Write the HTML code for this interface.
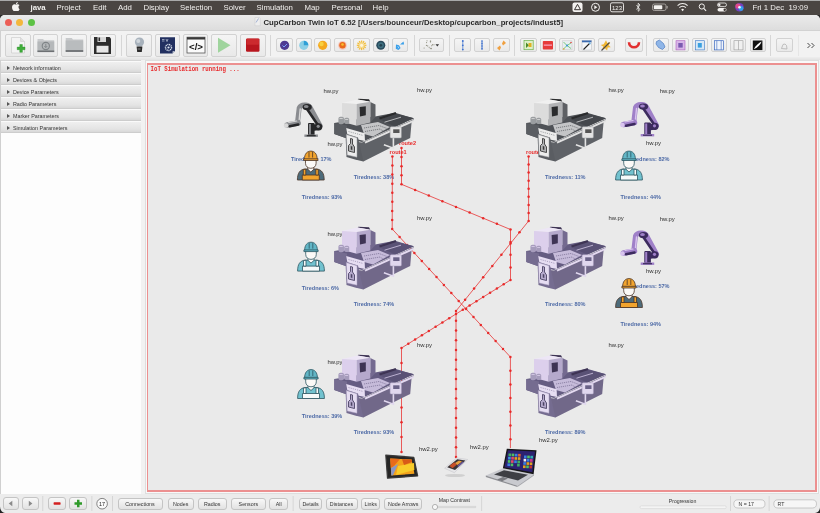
<!DOCTYPE html>
<html><head><meta charset="utf-8">
<style>
*{box-sizing:border-box;margin:0;padding:0}
html,body{width:820px;height:513px;overflow:hidden;background:#2b2b2b;font-family:"Liberation Sans",sans-serif;-webkit-font-smoothing:antialiased}
#root{position:absolute;left:0;top:0;width:820px;height:513px;will-change:transform}
.a{position:absolute}
#menubar{left:0;top:0;width:820px;height:15px;background:#4a4542;border-top:1px solid #a9a9a9;color:#f2f0ee;font-size:7.8px}
#menubar span{position:absolute;top:1.5px;white-space:nowrap}
#win{left:0;top:14.5px;width:820px;height:498.5px;background:#f2f2f2;border-radius:5px 5px 0 0;overflow:hidden;border-left:1px solid #d0d0d0}
#titlebar{left:0;top:14.5px;width:820px;height:16px;background:linear-gradient(#ebebeb,#dddddd);border-bottom:1px solid #d2d2d2;border-radius:5px 5px 0 0}
.tl{position:absolute;top:19px;width:7px;height:7px;border-radius:50%}
#title{left:263.5px;top:18px;font-size:7.76px;font-weight:bold;color:#2a2a2a;white-space:nowrap}
.btn{position:absolute;border:1px solid #d2d2d2;border-radius:2px;background:linear-gradient(#f4f4f4,#e9e9e9)}
.sep{position:absolute;width:1px;background:#d6d6d6}
#panel{left:1px;top:60.2px;width:139.6px;height:434px;background:#fdfdfd;border-top:0.8px solid #d6d6d6}
.row{position:absolute;left:0;width:139.6px;height:12px;background:linear-gradient(#efefef,#e4e4e4 70%,#d8d8d8);border-bottom:1px solid #cdcdcd;border-top:0.5px solid #fafafa;font-size:5.4px;color:#333}
.row span{position:absolute;left:11.9px;top:2.6px;white-space:nowrap}
.row i{position:absolute;left:5.6px;top:3.8px;width:0;height:0;border-left:3px solid #555;border-top:2px solid transparent;border-bottom:2px solid transparent}
#map{left:146.8px;top:62.6px;width:669.8px;height:429px;border:2px solid #ec9090;border-left-width:1.6px;background:#eaeaea;overflow:hidden}
.bb{position:absolute;top:497.5px;height:12.5px;border:1px solid #c4c4c4;border-radius:3px;background:linear-gradient(#f8f8f8,#e2e2e2);font-size:5.3px;color:#333;text-align:center;line-height:10.5px;white-space:nowrap}
</style></head><body><div id="root">
<div id="menubar" class="a">
<svg class="a" style="left:11.5px;top:1px" width="8" height="9" viewBox="0 0 170 200"><path fill="#f4f2f0" d="M140 107c0-26 21-38 22-39-12-18-31-20-37-21-16-2-31 9-39 9s-20-9-34-9C33 48 15 59 6 76c-19 33-5 82 13 108 9 13 19 27 33 26 13-1 18-8 34-8s20 8 34 8c14 0 23-13 32-26 10-15 14-29 14-30-1 0-26-10-26-47zM114 31c7-9 12-21 11-33-10 0-23 7-30 16-7 8-13 20-11 32 11 1 23-6 30-15z" transform="translate(0,2)"/></svg>
<span style="left:30.5px;font-weight:bold">java</span>
<span style="left:56.5px;">Project</span>
<span style="left:93px;">Edit</span>
<span style="left:118px;">Add</span>
<span style="left:143.5px;">Display</span>
<span style="left:180px;">Selection</span>
<span style="left:223.5px;">Solver</span>
<span style="left:256.5px;">Simulation</span>
<span style="left:304.5px;">Map</span>
<span style="left:331.5px;">Personal</span>
<span style="left:372.5px;">Help</span>
<span style="left:752.5px;">Fri 1 Dec&nbsp; 19:09</span>
</div>
<div id="win" class="a"></div>
<svg class="a" style="left:0;top:0" width="820" height="15" viewBox="0 0 820 15">
<rect x="572.5" y="2.5" width="10" height="9.5" rx="2" fill="#f4f2f0"/><path d="M577.5 4.3l3 5.4h-6z" fill="none" stroke="#3c3633" stroke-width="1"/>
<circle cx="595.5" cy="7.3" r="4" fill="none" stroke="#f4f2f0" stroke-width="1"/><path d="M594.3 5.3l3 2-3 2z" fill="#f4f2f0"/>
<rect x="610.5" y="2.8" width="13" height="9" rx="1.5" fill="none" stroke="#f4f2f0" stroke-width="0.9"/><text x="617" y="10" font-family="Liberation Sans" font-size="6" fill="#f4f2f0" text-anchor="middle">123</text>
<path d="M636.5 5l3.5 4.5-1.8 1.8V3.2l1.8 1.8-3.5 4.5" fill="none" stroke="#f4f2f0" stroke-width="0.8"/>
<rect x="652.5" y="4" width="13.5" height="6.5" rx="1.8" fill="none" stroke="#b8b4b0" stroke-width="0.8"/><rect x="653.8" y="5.3" width="8.5" height="4" rx="0.8" fill="#f4f2f0"/><rect x="666.6" y="6" width="1" height="2.5" fill="#b8b4b0"/>
<path d="M677.6 5.6a7 7 0 0 1 10 0" fill="none" stroke="#f4f2f0" stroke-width="1.1"/><path d="M679.4 7.6a4.4 4.4 0 0 1 6.4 0" fill="none" stroke="#f4f2f0" stroke-width="1.1"/><path d="M681.2 9.6a1.9 1.9 0 0 1 2.8 0l-1.4 1.6z" fill="#f4f2f0"/>
<circle cx="701.8" cy="6.5" r="2.6" fill="none" stroke="#f4f2f0" stroke-width="1"/><path d="M703.7 8.4l2.4 2.4" stroke="#f4f2f0" stroke-width="1.1"/>
<rect x="717.5" y="3" width="9" height="3.6" rx="1.8" fill="none" stroke="#f4f2f0" stroke-width="0.8"/><rect x="717.5" y="8" width="9" height="3.6" rx="1.8" fill="#f4f2f0"/><circle cx="719.3" cy="4.8" r="1.2" fill="#f4f2f0"/><circle cx="724.7" cy="9.8" r="1.2" fill="#3c3633"/>
<circle cx="739.5" cy="7.3" r="4.3" fill="#7040c0"/><circle cx="738" cy="6" r="2.6" fill="#e04a8a"/><circle cx="741" cy="8.5" r="2.4" fill="#30a0e8"/><circle cx="739.5" cy="7.3" r="1.3" fill="#f0f0ff"/>
</svg>
<div id="titlebar" class="a"></div>
<div class="a" style="left:0;top:57px;width:820px;height:3.4px;background:linear-gradient(#eeeeee,#e2e2e2)"></div>
<div class="tl" style="left:4.8px;background:#ec5f57"></div><div class="tl" style="left:16.3px;background:#f3b73d"></div><div class="tl" style="left:27.7px;background:#5dc245"></div>
<div id="title" class="a">CupCarbon Twin IoT 6.52 [/Users/bounceur/Desktop/cupcarbon_projects/indust5]</div>
<div class="btn" style="left:4.5px;top:34.3px;width:26.0px;height:22.4px"></div>
<div class="btn" style="left:33.3px;top:34.3px;width:25.2px;height:22.4px"></div>
<div class="btn" style="left:61.4px;top:34.3px;width:25.9px;height:22.4px"></div>
<div class="btn" style="left:89.6px;top:34.3px;width:26.2px;height:22.4px"></div>
<div class="btn" style="left:126px;top:34.3px;width:25.8px;height:22.4px"></div>
<div class="btn" style="left:154.6px;top:34.3px;width:25.8px;height:22.4px"></div>
<div class="btn" style="left:183.4px;top:34.3px;width:25.0px;height:22.4px"></div>
<div class="btn" style="left:211.3px;top:34.3px;width:25.9px;height:22.4px"></div>
<div class="btn" style="left:239.6px;top:34.3px;width:26.3px;height:22.4px"></div>
<div class="btn" style="left:276.3px;top:38.3px;width:16.7px;height:14.2px"></div>
<div class="btn" style="left:295.6px;top:38.3px;width:16.5px;height:14.2px"></div>
<div class="btn" style="left:314.4px;top:38.3px;width:16.6px;height:14.2px"></div>
<div class="btn" style="left:334px;top:38.3px;width:17.0px;height:14.2px"></div>
<div class="btn" style="left:353.3px;top:38.3px;width:16.7px;height:14.2px"></div>
<div class="btn" style="left:372.5px;top:38.3px;width:16.7px;height:14.2px"></div>
<div class="btn" style="left:391.7px;top:38.3px;width:16.7px;height:14.2px"></div>
<div class="btn" style="left:454.3px;top:38.3px;width:17.0px;height:14.2px"></div>
<div class="btn" style="left:473.8px;top:38.3px;width:16.2px;height:14.2px"></div>
<div class="btn" style="left:493.3px;top:38.3px;width:16.5px;height:14.2px"></div>
<div class="btn" style="left:520.2px;top:38.3px;width:16.8px;height:14.2px"></div>
<div class="btn" style="left:539.5px;top:38.3px;width:16.8px;height:14.2px"></div>
<div class="btn" style="left:559.3px;top:38.3px;width:16.1px;height:14.2px"></div>
<div class="btn" style="left:578.3px;top:38.3px;width:16.9px;height:14.2px"></div>
<div class="btn" style="left:597.6px;top:38.3px;width:17.0px;height:14.2px"></div>
<div class="btn" style="left:625.2px;top:38.3px;width:17.5px;height:14.2px"></div>
<div class="btn" style="left:652.5px;top:38.3px;width:16.4px;height:14.2px"></div>
<div class="btn" style="left:672.3px;top:38.3px;width:16.4px;height:14.2px"></div>
<div class="btn" style="left:691.5px;top:38.3px;width:16.5px;height:14.2px"></div>
<div class="btn" style="left:710.7px;top:38.3px;width:16.5px;height:14.2px"></div>
<div class="btn" style="left:730.4px;top:38.3px;width:16.0px;height:14.2px"></div>
<div class="btn" style="left:749.6px;top:38.3px;width:16.0px;height:14.2px"></div>
<div class="btn" style="left:776.2px;top:38.3px;width:17.1px;height:14.2px"></div>
<div class="btn" style="left:419.3px;top:38.3px;width:24.3px;height:14px"></div>
<div class="sep" style="left:120.5px;top:35px;height:21px"></div>
<div class="sep" style="left:269.8px;top:35px;height:21px"></div>
<div class="sep" style="left:413.5px;top:35px;height:21px"></div>
<div class="sep" style="left:448.5px;top:35px;height:21px"></div>
<div class="sep" style="left:514.2px;top:35px;height:21px"></div>
<div class="sep" style="left:646.4px;top:35px;height:21px"></div>
<div class="sep" style="left:770.4px;top:35px;height:21px"></div>
<div class="sep" style="left:797.8px;top:35px;height:21px;background:#e6e6e6"></div>
<svg class="a" style="left:0;top:0" width="820" height="60" viewBox="0 0 820 60">
<path d="M255 17.5h4.5l0.8 0.8v7.5h-5.3z" fill="#eeeeee" stroke="#c4c4c8" stroke-width="0.4"/><path d="M256 22.5l2.5-4" stroke="#9aaad0" stroke-width="0.9"/>
<path d="M11.5 37.5h9l4 4v11.5h-13z" fill="#f4f4f4" stroke="#c8c8c8" stroke-width="0.6"/><path d="M20.5 37.5v4h4" fill="#e0e0e0" stroke="#c8c8c8" stroke-width="0.5"/>
<path d="M19.8 44.5h2.6v2.6h2.6v2.6h-2.6v2.6h-2.6v-2.6h-2.6v-2.6h2.6z" fill="#3fae3a" stroke="#2b8a28" stroke-width="0.4"/>
<path d="M37.5 39h5.5l1.2 1.3h10v11.7h-16.7z" fill="#c9cbcd"/><rect x="37.5" y="41.5" width="16.7" height="10.5" fill="#b5b8ba"/><rect x="37.5" y="50.5" width="16.7" height="1.6" fill="#6d7073"/><circle cx="45.8" cy="46" r="3.6" fill="none" stroke="#7f8487" stroke-width="1.1"/><path d="M45.8 43.8v3.6M44.3 46l1.5 1.6 1.5-1.6" stroke="#7f8487" stroke-width="0.9" fill="none"/>
<path d="M65.7 38h6l1.3 1.4h10.2v12.4h-17.5z" fill="#c7c9cb"/><rect x="65.7" y="40.5" width="17.5" height="11.3" fill="#b9bcbe"/><rect x="65.7" y="50.2" width="17.5" height="1.6" fill="#65686b"/>
<path d="M94 37h15.5l1.5 1.5v15.4h-17z" fill="#2c2c2c"/><rect x="97.5" y="37" width="8.5" height="5" fill="#d8d8d8"/><rect x="98.5" y="37.5" width="1.6" height="3.6" fill="#2c2c2c"/><rect x="96.5" y="45.8" width="12" height="6.8" fill="#e6e6e6"/>
<circle cx="139.5" cy="42" r="4.6" fill="#a8b2bc"/><circle cx="138.3" cy="41" r="2" fill="#d0d6dc"/><path d="M136.6 46.5h5.8l-0.6 5.6h-4.6z" fill="#2a2a2a"/><rect x="137.6" y="48.5" width="3" height="1" fill="#888"/>
<path d="M160 37.2h15v14l-2.4 2.4h-12.6z" fill="#223060"/><path d="M172.6 53.6v-2.4h2.4z" fill="#dfe3ea"/><circle cx="168.5" cy="47.5" r="3" fill="none" stroke="#dfe6f0" stroke-width="1.4" stroke-dasharray="1.1 0.7"/><circle cx="168.5" cy="47.5" r="1.1" fill="#dfe6f0"/><path d="M162 39.5h2.5M162 41h2.5M166 39l1 2.5 1-2.5" stroke="#dfe6f0" stroke-width="0.6" fill="none"/>
<rect x="187" y="37.2" width="18" height="15.8" fill="#fafafa" stroke="#555" stroke-width="0.8"/><rect x="187" y="37.2" width="18" height="2.3" fill="#3a3a3a"/><text x="196" y="50" font-family="Liberation Sans" font-size="9" font-weight="bold" text-anchor="middle" fill="#111" textLength="14" lengthAdjust="spacingAndGlyphs">&lt;/&gt;</text>
<path d="M218 37.8L230.5 45.3L218 52.8z" fill="#9fd49d"/>
<rect x="246" y="38.4" width="13.5" height="13.4" rx="1.2" fill="#b8161e"/><rect x="246.5" y="38.8" width="12.5" height="6" rx="1" fill="#cc2a2e"/>
<circle cx="284.6" cy="45.3" r="4.6" fill="#4f3a92"/><path d="M282.5 45.5l1.5 1.5 3-3" stroke="#7aa0ff" stroke-width="1" fill="none"/>
<circle cx="303.8" cy="45.3" r="4.6" fill="#8ccfe6"/><path d="M303.8 40.7a4.6 4.6 0 0 1 4.6 4.6h-4.6z" fill="#2f9fd6"/>
<circle cx="322.7" cy="45.3" r="4.6" fill="#f4a81e"/><circle cx="321.5" cy="44" r="2.2" fill="#f8d040"/>
<circle cx="342.5" cy="45.3" r="4.4" fill="#f3c6bf"/><circle cx="342.5" cy="45.3" r="3.2" fill="#ea6a1c"/><circle cx="342.5" cy="44.5" r="1.3" fill="#f8c030"/>
<g stroke="#f2be3c" stroke-width="1.3"><line x1="364.20" y1="45.30" x2="366.40" y2="45.30"/><line x1="363.85" y1="46.60" x2="365.76" y2="47.70"/><line x1="362.90" y1="47.55" x2="364.00" y2="49.46"/><line x1="361.60" y1="47.90" x2="361.60" y2="50.10"/><line x1="360.30" y1="47.55" x2="359.20" y2="49.46"/><line x1="359.35" y1="46.60" x2="357.44" y2="47.70"/><line x1="359.00" y1="45.30" x2="356.80" y2="45.30"/><line x1="359.35" y1="44.00" x2="357.44" y2="42.90"/><line x1="360.30" y1="43.05" x2="359.20" y2="41.14"/><line x1="361.60" y1="42.70" x2="361.60" y2="40.50"/><line x1="362.90" y1="43.05" x2="364.00" y2="41.14"/><line x1="363.85" y1="44.00" x2="365.76" y2="42.90"/></g><circle cx="361.6" cy="45.3" r="2.6" fill="#f6d884"/><circle cx="361.6" cy="45.3" r="1.6" fill="#fff4d8"/>
<circle cx="380.8" cy="45.3" r="4.5" fill="#2a4a5c"/><circle cx="380.8" cy="45.3" r="3" fill="#3f7080"/><circle cx="380.8" cy="45.3" r="1.4" fill="#24414f"/>
<path d="M396 44.5l3 0.8 1.6 2.8-2.2 1.8-2.6-1.2z" fill="#3aa0ea"/><path d="M400 44.5l3.5-3 0.6 3z" fill="#3aa0ea"/><path d="M397.5 46.5l1.2 0.6-0.6 1.2" stroke="#fff" stroke-width="0.5" fill="none"/>
<g fill="#8a8a7a"><circle cx="426.4" cy="45.4" r="0.55"/><circle cx="427.7" cy="45.9" r="0.55"/><circle cx="430.3" cy="41.1" r="0.55"/><circle cx="424.1" cy="48.0" r="0.55"/><circle cx="426.6" cy="42.6" r="0.55"/><circle cx="434.0" cy="44.7" r="0.55"/><circle cx="432.4" cy="44.8" r="0.55"/><circle cx="430.4" cy="41.9" r="0.55"/><circle cx="430.3" cy="48.3" r="0.55"/><circle cx="429.2" cy="47.2" r="0.55"/><circle cx="430.7" cy="41.1" r="0.55"/><circle cx="431.6" cy="45.8" r="0.55"/><circle cx="427.0" cy="40.8" r="0.55"/><circle cx="432.7" cy="44.8" r="0.55"/><circle cx="431.2" cy="48.4" r="0.55"/><circle cx="431.1" cy="48.8" r="0.55"/></g><path d="M435.5 44.2h3.6l-1.8 2.2z" fill="#333"/>
<g stroke="#5080d0" stroke-width="0.8"><line x1="462.8" y1="40.5" x2="462.8" y2="50"/></g><g fill="#3b6fd0"><circle cx="462.8" cy="41" r="0.9"/><circle cx="462.8" cy="45.3" r="0.9"/><circle cx="462.8" cy="49.6" r="0.9"/></g>
<g stroke="#4b78cc" stroke-width="1"><line x1="482" y1="40.5" x2="482" y2="50"/></g><g fill="#3b6fd0"><circle cx="482" cy="41" r="0.7"/><circle cx="482" cy="43.5" r="0.7"/><circle cx="482" cy="46" r="0.7"/><circle cx="482" cy="48.5" r="0.7"/></g>
<path d="M503.5 40.5l2.5 2.5-3 2.5-1-2z" fill="#f0a040"/><path d="M499.5 50.5l-2.5-2.5 3-2.5 1 2z" fill="#f0a040"/>
<rect x="524" y="40.5" width="9.2" height="9.2" fill="#dff0c8" stroke="#6ab04a" stroke-width="0.7"/><path d="M526 42.5l3 2.8-3 2.8z" fill="#4a8a2a"/><rect x="528.5" y="43" width="3" height="4" fill="#e0b020"/>
<rect x="542.8" y="41" width="10.2" height="8.6" rx="0.8" fill="#e63a3a"/><rect x="543.8" y="44.6" width="8.2" height="1" fill="#fbd"/>
<rect x="562.5" y="40.8" width="9.5" height="9" fill="#e8eef0" stroke="#c6c6c6" stroke-width="0.5"/><path d="M563.5 42l3.5 3.5 4-2.5M563.5 49l3.5-3.5 4 3" stroke="#5ac060" stroke-width="0.8" fill="none"/><circle cx="567" cy="45.5" r="1" fill="#3a90e0"/><circle cx="571" cy="42.5" r="0.8" fill="#e84040"/><circle cx="563.8" cy="49" r="0.8" fill="#e0a020"/>
<rect x="582" y="40.5" width="9.5" height="9.5" fill="#f4f6f8" stroke="#b8bcc0" stroke-width="0.5"/><rect x="582" y="40.5" width="9.5" height="1.8" fill="#3a6ab0"/><path d="M583.5 49.5l6-6" stroke="#222" stroke-width="1.1"/><path d="M589 42.5l1.5 1.5" stroke="#6ab0e0" stroke-width="1.4"/>
<path d="M606 40.2l1.3 2.7 3-0.5-1.6 2.5 2 2.3-3 0.3-0.6 3-2-2.1-2.8 1.1 0.9-2.9-2.5-1.7 3-0.7z" fill="#f2b833"/><path d="M601.5 50.5l8-8" stroke="#4a4a4a" stroke-width="1.1"/>
<path d="M629 42.3a5 5 0 0 0 10 0" stroke="#e23030" stroke-width="2.6" fill="none"/>
<path d="M656.5 41.5l3-1.5 4 3.5 1.5 3.5-2.5 2.5-4-2-2.5-3.5z" fill="#8fb6e8" stroke="#3f6fb8" stroke-width="0.6"/>
<rect x="676" y="40.7" width="9" height="9.2" fill="#d8b6e8" stroke="#b060c0" stroke-width="0.6"/><rect x="678.3" y="43" width="4.4" height="4.6" fill="#7a5ab0"/>
<rect x="695.3" y="40.7" width="9" height="9.2" fill="#d8e8f6" stroke="#3a78c8" stroke-width="0.6"/><rect x="697.8" y="43" width="4" height="4.6" fill="#3aa0e0"/>
<rect x="714.5" y="40.7" width="9" height="9.2" fill="#f0f4fa" stroke="#3a68c0" stroke-width="0.7"/><line x1="716.8" y1="40.7" x2="716.8" y2="49.9" stroke="#3a68c0" stroke-width="0.6"/><line x1="721.2" y1="40.7" x2="721.2" y2="49.9" stroke="#3a68c0" stroke-width="0.6"/>
<rect x="734" y="40.7" width="9" height="9.2" fill="#f0f0f0" stroke="#9a9a9a" stroke-width="0.6"/><line x1="738.5" y1="40.7" x2="738.5" y2="49.9" stroke="#9a9a9a" stroke-width="0.6"/>
<rect x="752.8" y="40.5" width="9.6" height="9.6" fill="#111"/><path d="M753.8 49.2c2-4 5-6.5 7.8-7.8-1 3-3.5 6-7.8 7.8z" fill="#fff"/>
<path d="M781.5 48.5l1.5-4 2-0.5 1.5 1.5 0.5 3.5z" fill="none" stroke="#aaa" stroke-width="0.7"/>
<path d="M807.5 43l2.5 2.5-2.5 2.5M811.5 43l2.5 2.5-2.5 2.5" stroke="#333" stroke-width="0.9" fill="none"/>
</svg>
<div id="panel" class="a">
<div class="row" style="top:0px"><i></i><span>Network information</span></div>
<div class="row" style="top:12px"><i></i><span>Devices &amp; Objects</span></div>
<div class="row" style="top:24px"><i></i><span>Device Parameters</span></div>
<div class="row" style="top:36px"><i></i><span>Radio Parameters</span></div>
<div class="row" style="top:48px"><i></i><span>Marker Parameters</span></div>
<div class="row" style="top:60px"><i></i><span>Simulation Parameters</span></div>
</div>
<div class="a" style="left:144.5px;top:60.3px;width:674px;height:434px;background:#f9f9f9;border:0.8px solid #dedede"></div>
<div id="map" class="a"></div>
<svg class="a" style="left:0;top:0" width="820" height="513" viewBox="0 0 820 513">
<defs>
<symbol id="mg" viewBox="0 0 82 66" overflow="visible">
<path d="M1.3 25 L37 19 L42 18.5 L62 14.8 L81 20.3 L29 44 L14 40.4 L1.3 36 Z" fill="#4f5257"/>
<path d="M1.3 25 L14 27.5 L14 40.4 L1.3 36 Z" fill="#5a5d62"/>
<path d="M29 44.5 L81 21 L78.5 25 L77.2 40 L30.4 63.5 L24.6 59.5 L24.6 44 Z" fill="#5f6267"/>
<path d="M47 21.5 L63 15.8 L81 20.3 L62 28.5 Z" fill="#44474c"/>
<path d="M51.5 24.2 L68 19.2" stroke="#c4c5c7" stroke-width="0.9"/>
<path d="M46.5 20.5 L63 15" stroke="#2a2b2d" stroke-width="2.2"/>
<path d="M28 27 L45 24 L57 29 L40 38.5 L31 36 Z" fill="#c4c5c7"/>
<path d="M31 30 L46 27.5 L54 30.5 M32 33.5 L47 31 L50 33" stroke="#5a5d62" stroke-width="0.7" fill="none" stroke-dasharray="1.2 0.8"/>
<path d="M32 44.6 L80.5 22.8" stroke="#e2e2e2" stroke-width="2"/>
<path d="M37.3 4 L42.5 6.5 L42.5 19 L37.3 24.6 Z" fill="#5e6064"/>
<path d="M25.4 0.8 L36 1.2 L37.3 3.7 L24.6 1.6 Z" fill="#2a2b2d"/>
<path d="M9 4.9 L24.6 1.4 L37.3 3.7 L23.7 6.1 Z" fill="#f0f0f0"/>
<path d="M9 4.9 L23.7 6.1 L23.7 27.8 L9 23.8 Z" fill="#dcdcdc"/>
<path d="M23.7 6.1 L37.3 3.7 L37.3 24.6 L23.7 27.8 Z" fill="#b2b3b5"/>
<path d="M26.6 9 L32.8 8.2 L32.8 17.2 L27 18.4 Z" fill="#2a2b2d"/>
<rect x="5.4" y="18.8" width="5.6" height="7.4" rx="2" fill="#9a9da0"/><rect x="11.2" y="19.7" width="5" height="6.4" rx="1.8" fill="#9a9da0"/>
<path d="M6.5 20.5 h3.2 M12.2 21.5 h3" stroke="#dcdcdc" stroke-width="0.8"/>
<path d="M13.2 29.9 L31.6 35.2 L32 43 L14.9 39.5 Z" fill="#ececec"/>
<path d="M15.5 33.5 L29.5 37.3" stroke="#9a9da0" stroke-width="0.9" stroke-dasharray="1.2 1"/>
<path d="M12.5 35.5 L25 39.5 L30.4 63.5 L22 61.5 L13.5 59 Z" fill="#5a5d62"/><path d="M13.3 36.5 L24 39.8 L24 59.2 L14.2 57 Z" fill="#ececec" stroke="#9a9da0" stroke-width="0.5"/>
<path d="M17.5 40.5 L19.5 41 L19.5 46 L21.5 49 L21.5 54.5 L15.5 53 L15.5 47.5 L17.5 45.5 Z" fill="#b2b3b5" stroke="#3a3a3a" stroke-width="0.9"/><path d="M17.8 48 L19.3 48.4 L19.3 52 L17.8 51.6 Z" fill="#3a3a3a"/>
<path d="M60.4 39 L60.4 50.2 L50.9 46.8" stroke="#e4e4e4" stroke-width="1.6" fill="none"/>
<rect x="57.1" y="28.75" width="11.3" height="11.25" rx="1" fill="#e4e4e4" stroke="#9a9da0" stroke-width="0.5"/>
<rect x="60.2" y="31.3" width="6.3" height="3.7" fill="#555"/>
</symbol>
<symbol id="mp" viewBox="0 0 82 66" overflow="visible">
<path d="M1.3 25 L37 19 L42 18.5 L62 14.8 L81 20.3 L29 44 L14 40.4 L1.3 36 Z" fill="#655c82"/>
<path d="M1.3 25 L14 27.5 L14 40.4 L1.3 36 Z" fill="#756c90"/>
<path d="M29 44.5 L81 21 L78.5 25 L77.2 40 L30.4 63.5 L24.6 59.5 L24.6 44 Z" fill="#716889"/>
<path d="M47 21.5 L63 15.8 L81 20.3 L62 28.5 Z" fill="#5a5276"/>
<path d="M51.5 24.2 L68 19.2" stroke="#c6bbda" stroke-width="0.9"/>
<path d="M46.5 20.5 L63 15" stroke="#3e3454" stroke-width="2.2"/>
<path d="M28 27 L45 24 L57 29 L40 38.5 L31 36 Z" fill="#c6bbda"/>
<path d="M31 30 L46 27.5 L54 30.5 M32 33.5 L47 31 L50 33" stroke="#756c90" stroke-width="0.7" fill="none" stroke-dasharray="1.2 0.8"/>
<path d="M32 44.6 L80.5 22.8" stroke="#e4daf0" stroke-width="2"/>
<path d="M37.3 4 L42.5 6.5 L42.5 19 L37.3 24.6 Z" fill="#746a90"/>
<path d="M25.4 0.8 L36 1.2 L37.3 3.7 L24.6 1.6 Z" fill="#3e3454"/>
<path d="M9 4.9 L24.6 1.4 L37.3 3.7 L23.7 6.1 Z" fill="#ede6f6"/>
<path d="M9 4.9 L23.7 6.1 L23.7 27.8 L9 23.8 Z" fill="#dccfec"/>
<path d="M23.7 6.1 L37.3 3.7 L37.3 24.6 L23.7 27.8 Z" fill="#b5a9cc"/>
<path d="M26.6 9 L32.8 8.2 L32.8 17.2 L27 18.4 Z" fill="#3e3454"/>
<rect x="5.4" y="18.8" width="5.6" height="7.4" rx="2" fill="#a69cbc"/><rect x="11.2" y="19.7" width="5" height="6.4" rx="1.8" fill="#a69cbc"/>
<path d="M6.5 20.5 h3.2 M12.2 21.5 h3" stroke="#dccfec" stroke-width="0.8"/>
<path d="M13.2 29.9 L31.6 35.2 L32 43 L14.9 39.5 Z" fill="#e6ddf2"/>
<path d="M15.5 33.5 L29.5 37.3" stroke="#a69cbc" stroke-width="0.9" stroke-dasharray="1.2 1"/>
<path d="M12.5 35.5 L25 39.5 L30.4 63.5 L22 61.5 L13.5 59 Z" fill="#756c90"/><path d="M13.3 36.5 L24 39.8 L24 59.2 L14.2 57 Z" fill="#e6ddf2" stroke="#a69cbc" stroke-width="0.5"/>
<path d="M17.5 40.5 L19.5 41 L19.5 46 L21.5 49 L21.5 54.5 L15.5 53 L15.5 47.5 L17.5 45.5 Z" fill="#b5a9cc" stroke="#4c4464" stroke-width="0.9"/><path d="M17.8 48 L19.3 48.4 L19.3 52 L17.8 51.6 Z" fill="#4c4464"/>
<path d="M60.4 39 L60.4 50.2 L50.9 46.8" stroke="#e0d7ee" stroke-width="1.6" fill="none"/>
<rect x="57.1" y="28.75" width="11.3" height="11.25" rx="1" fill="#e0d7ee" stroke="#a69cbc" stroke-width="0.5"/>
<rect x="60.2" y="31.3" width="6.3" height="3.7" fill="#6a6288"/>
</symbol>
<symbol id="rg" viewBox="0 0 40 35" overflow="visible">
<path d="M14 17 L15.5 4.5 Q17 1 22 1.5 Q26 2 27 5 L36.5 22.5" stroke="#8a8c90" stroke-width="5" fill="none" stroke-linecap="round" stroke-linejoin="round"/>
<path d="M23 5 L35.5 23.5" stroke="#262729" stroke-width="2.6" fill="none" stroke-linecap="round"/>
<path d="M16.5 5.5 L15.5 16" stroke="#d8d8d8" stroke-width="1.4" fill="none" stroke-linecap="round"/>
<ellipse cx="23.5" cy="3.6" rx="4.6" ry="3.2" fill="#262729"/><ellipse cx="22.5" cy="3" rx="2.4" ry="1.6" fill="#8a8c90"/>
<rect x="24.3" y="19.5" width="6.6" height="12.5" rx="1" fill="#262729"/>
<rect x="25.2" y="20.5" width="2" height="10.5" fill="#8a8c90"/>
<rect x="20.7" y="31" width="13.5" height="2.4" fill="#8a8c90"/><rect x="23" y="31.6" width="9" height="1.2" fill="#262729"/>
<path d="M28 21.5 L35 20 L36 26.5 L29 27.5 Z" fill="#262729"/><circle cx="35" cy="23.3" r="3.6" fill="#262729"/><circle cx="34.5" cy="22.8" r="1.6" fill="#8a8c90"/>
<path d="M14.5 19.5 L3.5 21.5" stroke="#8a8c90" stroke-width="5.5" fill="none" stroke-linecap="round"/>
<path d="M14.5 21 L6 22.8" stroke="#262729" stroke-width="2.6" fill="none" stroke-linecap="round"/>
<path d="M13 17.5 L5 19" stroke="#d8d8d8" stroke-width="1.2" fill="none" stroke-linecap="round"/>
<circle cx="2.4" cy="22" r="2.3" fill="#d8d8d8"/>
</symbol>
<symbol id="rp" viewBox="0 0 40 35" overflow="visible">
<path d="M14 17 L15.5 4.5 Q17 1 22 1.5 Q26 2 27 5 L36.5 22.5" stroke="#9f80c8" stroke-width="5" fill="none" stroke-linecap="round" stroke-linejoin="round"/>
<path d="M23 5 L35.5 23.5" stroke="#3c2b5e" stroke-width="2.6" fill="none" stroke-linecap="round"/>
<path d="M16.5 5.5 L15.5 16" stroke="#d8c4ee" stroke-width="1.4" fill="none" stroke-linecap="round"/>
<ellipse cx="23.5" cy="3.6" rx="4.6" ry="3.2" fill="#3c2b5e"/><ellipse cx="22.5" cy="3" rx="2.4" ry="1.6" fill="#9f80c8"/>
<rect x="24.3" y="19.5" width="6.6" height="12.5" rx="1" fill="#3c2b5e"/>
<rect x="25.2" y="20.5" width="2" height="10.5" fill="#9f80c8"/>
<rect x="20.7" y="31" width="13.5" height="2.4" fill="#9f80c8"/><rect x="23" y="31.6" width="9" height="1.2" fill="#3c2b5e"/>
<path d="M28 21.5 L35 20 L36 26.5 L29 27.5 Z" fill="#3c2b5e"/><circle cx="35" cy="23.3" r="3.6" fill="#3c2b5e"/><circle cx="34.5" cy="22.8" r="1.6" fill="#9f80c8"/>
<path d="M14.5 19.5 L3.5 21.5" stroke="#9f80c8" stroke-width="5.5" fill="none" stroke-linecap="round"/>
<path d="M14.5 21 L6 22.8" stroke="#3c2b5e" stroke-width="2.6" fill="none" stroke-linecap="round"/>
<path d="M13 17.5 L5 19" stroke="#d8c4ee" stroke-width="1.2" fill="none" stroke-linecap="round"/>
<circle cx="2.4" cy="22" r="2.3" fill="#d8c4ee"/>
</symbol>
<symbol id="wo" viewBox="0 0 28 30" overflow="visible">
<g stroke="#4a3528" stroke-width="0.8" stroke-linejoin="round">
<path d="M0.6 29.5 C0.6 22.5 3 19.3 8 18.5 L20 18.5 C25 19.3 27.4 22.5 27.4 29.5 Z" fill="#4d6b7a"/>
<path d="M11 14.5 L17 14.5 L17 18.8 L14 21.5 L11 18.8 Z" fill="#fbf9f7"/>
<path d="M8.7 9 L19.3 9 L19.3 12.8 C19.3 15.8 17 17.8 14 17.8 C11 17.8 8.7 15.8 8.7 12.8 Z" fill="#fbf9f7"/>
<path d="M5.5 24.5 L22.5 24.5 L22.5 29.5 L5.5 29.5 Z" fill="#f2a42e"/>
<path d="M6.5 19 L9 18.7 L9 24.5 L6.5 24.5 Z M19 18.7 L21.5 19 L21.5 24.5 L19 24.5 Z" fill="#f2a42e"/>
<path d="M7.6 9 C7.6 3.2 10.4 0.6 14 0.6 C17.6 0.6 20.4 3.2 20.4 9 Z" fill="#f2a42e"/>
<path d="M6.9 8.3 L21.1 8.3 L21.1 10 L6.9 10 Z" fill="#f2a42e"/>
<path d="M12.2 1.5 L12.2 7 M15.8 1.5 L15.8 7" fill="none"/>
</g>
</symbol>
<symbol id="wt" viewBox="0 0 28 30" overflow="visible">
<g stroke="#2c5561" stroke-width="0.8" stroke-linejoin="round">
<path d="M0.6 29.5 C0.6 22.5 3 19.3 8 18.5 L20 18.5 C25 19.3 27.4 22.5 27.4 29.5 Z" fill="#72c2cf"/>
<path d="M11 14.5 L17 14.5 L17 18.8 L14 21.5 L11 18.8 Z" fill="#fbf9f7"/>
<path d="M8.7 9 L19.3 9 L19.3 12.8 C19.3 15.8 17 17.8 14 17.8 C11 17.8 8.7 15.8 8.7 12.8 Z" fill="#fbf9f7"/>
<path d="M5.5 24.5 L22.5 24.5 L22.5 29.5 L5.5 29.5 Z" fill="#f6fafa"/>
<path d="M6.5 19 L9 18.7 L9 24.5 L6.5 24.5 Z M19 18.7 L21.5 19 L21.5 24.5 L19 24.5 Z" fill="#f6fafa"/>
<path d="M7.6 9 C7.6 3.2 10.4 0.6 14 0.6 C17.6 0.6 20.4 3.2 20.4 9 Z" fill="#62b6c6"/>
<path d="M6.9 8.3 L21.1 8.3 L21.1 10 L6.9 10 Z" fill="#62b6c6"/>
<path d="M12.2 1.5 L12.2 7 M15.8 1.5 L15.8 7" fill="none"/>
</g>
</symbol>
</defs>
<clipPath id="mc"><rect x="148.5" y="64.5" width="667" height="426"/></clipPath><g clip-path="url(#mc)">
<text x="150.6" y="71.1" font-family="Liberation Mono" font-weight="bold" font-size="6.5" fill="#e8282a" textLength="89" lengthAdjust="spacingAndGlyphs">IoT Simulation running ...</text>
<text x="323.4" y="93.1" font-family="Liberation Sans" font-size="5.9" font-weight="normal" fill="#2e2e2e">hw.py</text>
<text x="417" y="92.1" font-family="Liberation Sans" font-size="5.9" font-weight="normal" fill="#2e2e2e">hw.py</text>
<text x="327.5" y="146.1" font-family="Liberation Sans" font-size="5.9" font-weight="normal" fill="#2e2e2e">hw.py</text>
<text x="608.6" y="92.1" font-family="Liberation Sans" font-size="5.9" font-weight="normal" fill="#2e2e2e">hw.py</text>
<text x="659.7" y="93.1" font-family="Liberation Sans" font-size="5.9" font-weight="normal" fill="#2e2e2e">hw.py</text>
<text x="646" y="145.1" font-family="Liberation Sans" font-size="5.9" font-weight="normal" fill="#2e2e2e">hw.py</text>
<text x="417" y="219.6" font-family="Liberation Sans" font-size="5.9" font-weight="normal" fill="#2e2e2e">hw.py</text>
<text x="327.5" y="236.1" font-family="Liberation Sans" font-size="5.9" font-weight="normal" fill="#2e2e2e">hw.py</text>
<text x="417" y="347.1" font-family="Liberation Sans" font-size="5.9" font-weight="normal" fill="#2e2e2e">hw.py</text>
<text x="608.6" y="219.6" font-family="Liberation Sans" font-size="5.9" font-weight="normal" fill="#2e2e2e">hw.py</text>
<text x="659.7" y="221.1" font-family="Liberation Sans" font-size="5.9" font-weight="normal" fill="#2e2e2e">hw.py</text>
<text x="646" y="272.7" font-family="Liberation Sans" font-size="5.9" font-weight="normal" fill="#2e2e2e">hw.py</text>
<text x="608.6" y="347.1" font-family="Liberation Sans" font-size="5.9" font-weight="normal" fill="#2e2e2e">hw.py</text>
<text x="327.5" y="363.7" font-family="Liberation Sans" font-size="5.9" font-weight="normal" fill="#2e2e2e">hw.py</text>
<text x="419" y="450.7" font-family="Liberation Sans" font-size="5.9" font-weight="normal" fill="#2e2e2e">hw2.py</text>
<text x="470" y="449.1" font-family="Liberation Sans" font-size="5.9" font-weight="normal" fill="#2e2e2e">hw2.py</text>
<text x="539" y="441.7" font-family="Liberation Sans" font-size="5.9" font-weight="normal" fill="#2e2e2e">hw2.py</text>
<text x="291" y="160.7" font-family="Liberation Sans" font-size="6.0" font-weight="bold" fill="#4d6aa6" textLength="40.5" lengthAdjust="spacingAndGlyphs">Tiredness: 17%</text>
<text x="353.7" y="179.2" font-family="Liberation Sans" font-size="6.0" font-weight="bold" fill="#4d6aa6" textLength="40.5" lengthAdjust="spacingAndGlyphs">Tiredness: 38%</text>
<text x="301.8" y="199.2" font-family="Liberation Sans" font-size="6.0" font-weight="bold" fill="#4d6aa6" textLength="40.5" lengthAdjust="spacingAndGlyphs">Tiredness: 93%</text>
<text x="545" y="179.2" font-family="Liberation Sans" font-size="6.0" font-weight="bold" fill="#4d6aa6" textLength="40.5" lengthAdjust="spacingAndGlyphs">Tiredness: 11%</text>
<text x="629" y="160.5" font-family="Liberation Sans" font-size="6.0" font-weight="bold" fill="#4d6aa6" textLength="40.5" lengthAdjust="spacingAndGlyphs">Tiredness: 82%</text>
<text x="620.5" y="198.7" font-family="Liberation Sans" font-size="6.0" font-weight="bold" fill="#4d6aa6" textLength="40.5" lengthAdjust="spacingAndGlyphs">Tiredness: 44%</text>
<text x="301.8" y="289.8" font-family="Liberation Sans" font-size="6.0" font-weight="bold" fill="#4d6aa6" textLength="37.2" lengthAdjust="spacingAndGlyphs">Tiredness: 6%</text>
<text x="353.7" y="306.4" font-family="Liberation Sans" font-size="6.0" font-weight="bold" fill="#4d6aa6" textLength="40.5" lengthAdjust="spacingAndGlyphs">Tiredness: 74%</text>
<text x="545" y="306.4" font-family="Liberation Sans" font-size="6.0" font-weight="bold" fill="#4d6aa6" textLength="40.5" lengthAdjust="spacingAndGlyphs">Tiredness: 80%</text>
<text x="629" y="288.2" font-family="Liberation Sans" font-size="6.0" font-weight="bold" fill="#4d6aa6" textLength="40.5" lengthAdjust="spacingAndGlyphs">Tiredness: 57%</text>
<text x="620.5" y="326.2" font-family="Liberation Sans" font-size="6.0" font-weight="bold" fill="#4d6aa6" textLength="40.5" lengthAdjust="spacingAndGlyphs">Tiredness: 94%</text>
<text x="301.8" y="417.7" font-family="Liberation Sans" font-size="6.0" font-weight="bold" fill="#4d6aa6" textLength="40.5" lengthAdjust="spacingAndGlyphs">Tiredness: 39%</text>
<text x="353.7" y="433.9" font-family="Liberation Sans" font-size="6.0" font-weight="bold" fill="#4d6aa6" textLength="40.5" lengthAdjust="spacingAndGlyphs">Tiredness: 93%</text>
<text x="545" y="433.5" font-family="Liberation Sans" font-size="6.0" font-weight="bold" fill="#4d6aa6" textLength="40.5" lengthAdjust="spacingAndGlyphs">Tiredness: 89%</text>
<line x1="510.4" y1="439" x2="510.4" y2="448" stroke="#e82a2a" stroke-width="0.75"/>
<polyline points="392.4,156.5 392.2,229 510.4,357 510.4,439.2" fill="none" stroke="#e82a2a" stroke-width="0.75"/>
<g fill="#e82a2a"><circle cx="392.4" cy="156.5" r="1.25"/><circle cx="392.4" cy="165.6" r="1.25"/><circle cx="392.3" cy="174.6" r="1.25"/><circle cx="392.3" cy="183.7" r="1.25"/><circle cx="392.3" cy="192.8" r="1.25"/><circle cx="392.3" cy="201.8" r="1.25"/><circle cx="392.2" cy="210.9" r="1.25"/><circle cx="392.2" cy="219.9" r="1.25"/><circle cx="392.2" cy="229.0" r="1.25"/><circle cx="399.6" cy="237.0" r="1.25"/><circle cx="407.0" cy="245.0" r="1.25"/><circle cx="414.4" cy="253.0" r="1.25"/><circle cx="421.8" cy="261.0" r="1.25"/><circle cx="429.1" cy="269.0" r="1.25"/><circle cx="436.5" cy="277.0" r="1.25"/><circle cx="443.9" cy="285.0" r="1.25"/><circle cx="451.3" cy="293.0" r="1.25"/><circle cx="458.7" cy="301.0" r="1.25"/><circle cx="466.1" cy="309.0" r="1.25"/><circle cx="473.5" cy="317.0" r="1.25"/><circle cx="480.8" cy="325.0" r="1.25"/><circle cx="488.2" cy="333.0" r="1.25"/><circle cx="495.6" cy="341.0" r="1.25"/><circle cx="503.0" cy="349.0" r="1.25"/><circle cx="510.4" cy="357.0" r="1.25"/><circle cx="510.4" cy="370.7" r="1.25"/><circle cx="510.4" cy="384.4" r="1.25"/><circle cx="510.4" cy="398.1" r="1.25"/><circle cx="510.4" cy="411.8" r="1.25"/><circle cx="510.4" cy="425.5" r="1.25"/><circle cx="510.4" cy="439.2" r="1.25"/></g>
<polyline points="401.5,148 401.5,184.3 510.5,229.5 510.5,280 401.5,348 401.5,452" fill="none" stroke="#e82a2a" stroke-width="0.75"/>
<g fill="#e82a2a"><circle cx="401.5" cy="148.0" r="1.25"/><circle cx="401.5" cy="157.1" r="1.25"/><circle cx="401.5" cy="166.2" r="1.25"/><circle cx="401.5" cy="175.2" r="1.25"/><circle cx="401.5" cy="184.3" r="1.25"/><circle cx="415.1" cy="190.0" r="1.25"/><circle cx="428.8" cy="195.6" r="1.25"/><circle cx="442.4" cy="201.2" r="1.25"/><circle cx="456.0" cy="206.9" r="1.25"/><circle cx="469.6" cy="212.6" r="1.25"/><circle cx="483.2" cy="218.2" r="1.25"/><circle cx="496.9" cy="223.8" r="1.25"/><circle cx="510.5" cy="229.5" r="1.25"/><circle cx="510.5" cy="242.1" r="1.25"/><circle cx="510.5" cy="254.8" r="1.25"/><circle cx="510.5" cy="267.4" r="1.25"/><circle cx="510.5" cy="280.0" r="1.25"/><circle cx="503.7" cy="284.2" r="1.25"/><circle cx="496.9" cy="288.5" r="1.25"/><circle cx="490.1" cy="292.8" r="1.25"/><circle cx="483.2" cy="297.0" r="1.25"/><circle cx="476.4" cy="301.2" r="1.25"/><circle cx="469.6" cy="305.5" r="1.25"/><circle cx="462.8" cy="309.8" r="1.25"/><circle cx="456.0" cy="314.0" r="1.25"/><circle cx="449.2" cy="318.2" r="1.25"/><circle cx="442.4" cy="322.5" r="1.25"/><circle cx="435.6" cy="326.8" r="1.25"/><circle cx="428.8" cy="331.0" r="1.25"/><circle cx="421.9" cy="335.2" r="1.25"/><circle cx="415.1" cy="339.5" r="1.25"/><circle cx="408.3" cy="343.8" r="1.25"/><circle cx="401.5" cy="348.0" r="1.25"/><circle cx="401.5" cy="362.9" r="1.25"/><circle cx="401.5" cy="377.7" r="1.25"/><circle cx="401.5" cy="392.6" r="1.25"/><circle cx="401.5" cy="407.4" r="1.25"/><circle cx="401.5" cy="422.3" r="1.25"/><circle cx="401.5" cy="437.1" r="1.25"/><circle cx="401.5" cy="452.0" r="1.25"/></g>
<polyline points="528.6,156.5 528.6,221 456,311 456,457" fill="none" stroke="#e82a2a" stroke-width="0.75"/>
<g fill="#e82a2a"><circle cx="528.6" cy="156.5" r="1.25"/><circle cx="528.6" cy="164.6" r="1.25"/><circle cx="528.6" cy="172.6" r="1.25"/><circle cx="528.6" cy="180.7" r="1.25"/><circle cx="528.6" cy="188.8" r="1.25"/><circle cx="528.6" cy="196.8" r="1.25"/><circle cx="528.6" cy="204.9" r="1.25"/><circle cx="528.6" cy="212.9" r="1.25"/><circle cx="528.6" cy="221.0" r="1.25"/><circle cx="519.5" cy="232.2" r="1.25"/><circle cx="510.5" cy="243.5" r="1.25"/><circle cx="501.4" cy="254.8" r="1.25"/><circle cx="492.3" cy="266.0" r="1.25"/><circle cx="483.2" cy="277.2" r="1.25"/><circle cx="474.1" cy="288.5" r="1.25"/><circle cx="465.1" cy="299.8" r="1.25"/><circle cx="456.0" cy="311.0" r="1.25"/><circle cx="456.0" cy="320.7" r="1.25"/><circle cx="456.0" cy="330.5" r="1.25"/><circle cx="456.0" cy="340.2" r="1.25"/><circle cx="456.0" cy="349.9" r="1.25"/><circle cx="456.0" cy="359.7" r="1.25"/><circle cx="456.0" cy="369.4" r="1.25"/><circle cx="456.0" cy="379.1" r="1.25"/><circle cx="456.0" cy="388.9" r="1.25"/><circle cx="456.0" cy="398.6" r="1.25"/><circle cx="456.0" cy="408.3" r="1.25"/><circle cx="456.0" cy="418.1" r="1.25"/><circle cx="456.0" cy="427.8" r="1.25"/><circle cx="456.0" cy="437.5" r="1.25"/><circle cx="456.0" cy="447.3" r="1.25"/><circle cx="456.0" cy="457.0" r="1.25"/></g>
<text x="399" y="145" font-family="Liberation Sans" font-size="5.6" font-weight="bold" fill="#e82a2a">route2</text>
<text x="389.6" y="153.7" font-family="Liberation Sans" font-size="5.6" font-weight="bold" fill="#e82a2a">route1</text>
<text x="526" y="153.7" font-family="Liberation Sans" font-size="5.6" font-weight="bold" fill="#e82a2a">route</text>
<use href="#mg" x="333" y="98" width="82" height="66"/>
<use href="#mg" x="525" y="98" width="82" height="66"/>
<use href="#mp" x="333" y="226" width="82" height="66"/>
<use href="#mp" x="525" y="226" width="82" height="66"/>
<use href="#mp" x="333" y="354" width="82" height="66"/>
<use href="#mp" x="525" y="354" width="82" height="66"/>
<use href="#rg" x="283.7" y="103.5" width="40" height="35"/>
<use href="#rp" x="620" y="103" width="40" height="35"/>
<use href="#rp" x="620" y="231.5" width="40" height="35"/>
<use href="#wo" x="296.8" y="150.5" width="28" height="30"/>
<use href="#wt" x="615" y="150.5" width="28" height="30"/>
<use href="#wt" x="297" y="241.6" width="28" height="30"/>
<use href="#wo" x="615" y="278" width="28" height="30"/>
<use href="#wt" x="297" y="369" width="28" height="30"/>
<path d="M385.8 455.1 L413.8 457.3 L417.7 476 L387.5 478.2 Z" fill="#262626" stroke="#3a3a3a" stroke-width="1.2" stroke-linejoin="round"/>
<path d="M390.2 458.4 L411.6 459.5 L414.4 473.8 L391.3 475.4 Z" fill="#f3a21c"/>
<path d="M390.2 458.4 L400 459 L394 466 L390.8 468 Z" fill="#e86a1a"/><path d="M391 468 L398 464 L393 475.2 L391.3 475.4 Z" fill="#8896c8"/><path d="M398 466 L414 463 L414.4 470 L396 475 Z" fill="#f8cc2a"/><path d="M402 459.2 L411.6 459.5 L412 462 L404 465 Z" fill="#d85a18"/>
<ellipse cx="455" cy="475.5" rx="10" ry="1.6" fill="#c4c4c4" opacity="0.7"/>
<path d="M444.6 468.3 L456.6 457.9 L467.6 459.5 L454.4 472.7 Z" fill="#e6e6e8" stroke="#c8c8cc" stroke-width="0.6" stroke-linejoin="round"/>
<path d="M447.2 467.2 L457.2 459.3 L465.5 460.5 L455 470 Z" fill="#3a3438"/><path d="M449.5 466 L454 462.3 L457 464.5 L452.5 468.2 Z" fill="#c8502a"/><path d="M455 463 L459 460.5 L462 461.5 L457.5 465 Z" fill="#e8a040"/><path d="M457.5 465.5 L462.5 461.5 L464 462 L458 467.5 Z" fill="#6a5a9a"/>
<path d="M485.8 475.6 L502.9 468.3 L534 474.2 L517.5 485.8 Z" fill="#c9cacf"/>
<path d="M485.8 475.6 L517.5 485.8 L517.5 487 L485.8 477 Z" fill="#8f9095"/><path d="M517.5 485.8 L534 474.2 L534 475.5 L517.5 487 Z" fill="#a8a9ae"/>
<path d="M494 474.5 L504 470.2 L528 474.8 L518 480.5 Z" fill="#3e3f44"/>
<path d="M497 479.5 L503 477 L508 478.5 L502 481.3 Z" fill="#7a7b80"/>
<path d="M506.8 448.8 L536.5 450.2 L533.6 474.2 L502.9 468.3 Z" fill="#161618"/>
<path d="M508 450.3 L535 451.6 L532.3 472.2 L504.5 467.2 Z" fill="#2c2270"/>
<rect x="508.5" y="453.5" width="2.6" height="2.7" fill="#40b060"/><rect x="508.1" y="456.8" width="2.6" height="2.7" fill="#3a9ae0"/><rect x="507.8" y="460.1" width="2.6" height="2.7" fill="#50c060"/><rect x="507.4" y="463.4" width="2.6" height="2.7" fill="#3a80e0"/><rect x="511.7" y="453.6" width="2.6" height="2.7" fill="#50c060"/><rect x="511.3" y="456.9" width="2.6" height="2.7" fill="#e04a6a"/><rect x="511.0" y="460.2" width="2.6" height="2.7" fill="#e04a6a"/><rect x="510.6" y="463.5" width="2.6" height="2.7" fill="#50c060"/><rect x="514.9" y="453.8" width="2.6" height="2.7" fill="#3a80e0"/><rect x="514.5" y="457.1" width="2.6" height="2.7" fill="#e0a020"/><rect x="514.2" y="460.4" width="2.6" height="2.7" fill="#3a80e0"/><rect x="518.1" y="453.9" width="2.6" height="2.7" fill="#e06030"/><rect x="517.8" y="457.2" width="2.6" height="2.7" fill="#e0a020"/><rect x="517.4" y="460.6" width="2.6" height="2.7" fill="#40b060"/><rect x="517.1" y="463.8" width="2.6" height="2.7" fill="#40b060"/><rect x="524.0" y="455.5" width="2.6" height="2.7" fill="#3a80e0"/><rect x="523.6" y="458.8" width="2.6" height="2.7" fill="#f0f0f0"/><rect x="523.3" y="462.1" width="2.6" height="2.7" fill="#3a80e0"/><rect x="523.0" y="465.4" width="2.6" height="2.7" fill="#e0a020"/><rect x="527.2" y="455.6" width="2.6" height="2.7" fill="#50c060"/><rect x="526.9" y="458.9" width="2.6" height="2.7" fill="#3a80e0"/><rect x="526.5" y="462.2" width="2.6" height="2.7" fill="#e0a020"/><rect x="526.2" y="465.5" width="2.6" height="2.7" fill="#50c060"/><rect x="530.4" y="455.8" width="2.6" height="2.7" fill="#30b0b0"/><rect x="530.0" y="459.1" width="2.6" height="2.7" fill="#d03a8a"/><rect x="529.7" y="462.4" width="2.6" height="2.7" fill="#e0a020"/><rect x="529.4" y="465.7" width="2.6" height="2.7" fill="#c03030"/>
</g></svg>
<div class="a" style="left:0;top:494.3px;width:820px;height:18.7px;background:#ececec"></div>
<div class="bb" style="left:2.6px;top:497px;width:16.0px;height:13px;line-height:11.5px"></div>
<div class="bb" style="left:22.4px;top:497px;width:16.4px;height:13px;line-height:11.5px"></div>
<div class="bb" style="left:48.3px;top:497px;width:17.6px;height:13px;line-height:11.5px"></div>
<div class="bb" style="left:69.2px;top:497px;width:18.3px;height:13px;line-height:11.5px"></div>
<div class="bb" style="left:117.5px;top:498px;width:45.0px;height:11.5px;line-height:10.0px">Connections</div>
<div class="bb" style="left:167.5px;top:498px;width:26.3px;height:11.5px;line-height:10.0px">Nodes</div>
<div class="bb" style="left:197.5px;top:498px;width:29.4px;height:11.5px;line-height:10.0px">Radios</div>
<div class="bb" style="left:230.7px;top:498px;width:35.3px;height:11.5px;line-height:10.0px">Sensors</div>
<div class="bb" style="left:269px;top:498px;width:19.3px;height:11.5px;line-height:10.0px">All</div>
<div class="bb" style="left:298.6px;top:498px;width:23.8px;height:11.5px;line-height:10.0px">Details</div>
<div class="bb" style="left:325.5px;top:498px;width:32.0px;height:11.5px;line-height:10.0px">Distances</div>
<div class="bb" style="left:360.8px;top:498px;width:19.7px;height:11.5px;line-height:10.0px">Links</div>
<div class="bb" style="left:383.9px;top:498px;width:38.6px;height:11.5px;line-height:10.0px">Node Arrows</div>
<svg class="a" style="left:0;top:490" width="820" height="23" viewBox="0 490 820 23">
<path d="M12.3 500.8v5.5l-3.6-2.75z" fill="#8a8a8a"/><path d="M28.8 500.8v5.5l3.6-2.75z" fill="#8a8a8a"/>
<rect x="53.6" y="502.3" width="7" height="2.4" rx="0.6" fill="#d42020"/>
<path d="M77 499.8h2.5v2.5h2.5v2.5h-2.5v2.5h-2.5v-2.5h-2.5v-2.5h2.5z" fill="#2f9a2a"/>
<circle cx="102.1" cy="503.7" r="5.3" fill="#fafafa" stroke="#555" stroke-width="0.7"/><text x="102.1" y="505.6" font-family="Liberation Sans" font-size="5.4" text-anchor="middle" fill="#222">17</text>
<rect x="42.4" y="496" width="0.8" height="15" fill="#d0d0d0"/>
<rect x="91.5" y="496" width="0.8" height="15" fill="#d0d0d0"/>
<rect x="112" y="496" width="0.8" height="15" fill="#d0d0d0"/>
<rect x="292.7" y="496" width="0.8" height="15" fill="#d0d0d0"/>
<rect x="481.3" y="496" width="0.8" height="15" fill="#d0d0d0"/>
<rect x="730" y="496" width="0.8" height="15" fill="#d0d0d0"/>
<rect x="768.7" y="496" width="0.8" height="15" fill="#d0d0d0"/>
<rect x="433" y="506.3" width="43" height="1.4" rx="0.7" fill="#dcdcdc" stroke="#c8c8c8" stroke-width="0.4"/><circle cx="435" cy="507" r="2.6" fill="#f8f8f8" stroke="#8a8a8a" stroke-width="0.6"/>
<text x="438.8" y="502" font-family="Liberation Sans" font-size="5.2" fill="#333">Map Contrast</text>
<text x="668.7" y="503" font-family="Liberation Sans" font-size="5.2" fill="#333">Progression</text>
<rect x="640" y="505.8" width="86.3" height="2.8" rx="1.4" fill="#f4f4f4" stroke="#cfcfcf" stroke-width="0.5"/>
<rect x="733.8" y="499.8" width="31.2" height="8.2" rx="4.1" fill="#f6f6f6" stroke="#bdbdbd" stroke-width="0.8"/><text x="738.5" y="505.8" font-family="Liberation Sans" font-size="5.2" fill="#333">N = 17</text>
<rect x="773.8" y="499.8" width="42.7" height="8.2" rx="4.1" fill="#f6f6f6" stroke="#bdbdbd" stroke-width="0.8"/><text x="777.5" y="505.8" font-family="Liberation Sans" font-size="5.2" fill="#333">RT</text>
<path d="M0 506.5Q0.5 512.5 5 513H0z" fill="#222"/><path d="M820 507.5Q819.5 512.5 815 513H820z" fill="#222"/>
</svg>
</div></body></html>
